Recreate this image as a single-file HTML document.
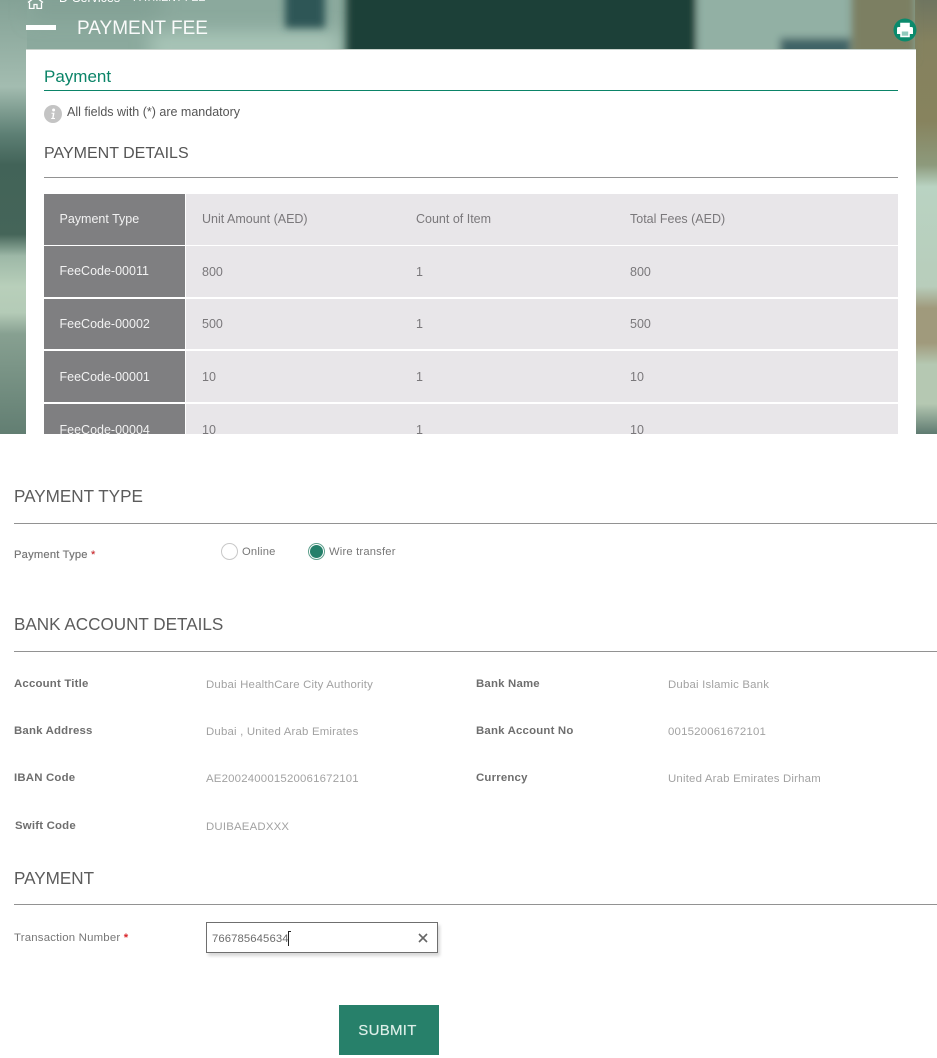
<!DOCTYPE html>
<html>
<head>
<meta charset="utf-8">
<style>
html,body{margin:0;padding:0;background:#fff;}
body{width:937px;height:1058px;position:relative;overflow:hidden;font-family:"Liberation Sans",sans-serif;}
.a{position:absolute;white-space:nowrap;}
.hr{position:absolute;height:1px;background:#929292;}
.dark{position:absolute;left:44px;width:141px;background:#7f7f81;}
.light{position:absolute;left:186px;width:712px;background:#e8e6e9;}
.dt{color:#fff;font-size:12.5px;left:59.5px;position:absolute;white-space:nowrap;opacity:.9;}
.lt{color:#7a787b;font-size:12.5px;position:absolute;white-space:nowrap;}
.h{position:absolute;left:14px;font-size:17.1px;color:#5c5c5c;white-space:nowrap;filter:blur(.3px);}
.lab{position:absolute;font-size:11.4px;font-weight:bold;color:#6e6e6e;white-space:nowrap;letter-spacing:.2px;filter:blur(.3px);}
.val{position:absolute;font-size:11.4px;color:#a2a2a2;white-space:nowrap;letter-spacing:.2px;filter:blur(.3px);}
</style>
</head>
<body>
<div style="position:absolute;left:0;top:0;width:937px;height:434px;overflow:hidden;background:#8ba99d;">
<svg width="937" height="434" style="position:absolute;left:0;top:0">
<defs>
<linearGradient id="l" x1="0" y1="0" x2="0" y2="1">
<stop offset="0" stop-color="#84a296"/>
<stop offset=".2" stop-color="#a3bcb0"/>
<stop offset=".255" stop-color="#7f9d91"/>
<stop offset=".31" stop-color="#5d7f74"/>
<stop offset=".38" stop-color="#426358"/>
<stop offset=".54" stop-color="#456559"/>
<stop offset=".59" stop-color="#9db8a7"/>
<stop offset=".66" stop-color="#b8cfba"/>
<stop offset=".72" stop-color="#b4cbb7"/>
<stop offset=".77" stop-color="#87a091"/>
<stop offset="1" stop-color="#627e72"/>
</linearGradient>
<linearGradient id="r" x1="0" y1="0" x2="0" y2="1">
<stop offset="0" stop-color="#6f7560"/>
<stop offset=".1" stop-color="#85825f"/>
<stop offset=".28" stop-color="#87835e"/>
<stop offset=".38" stop-color="#8d9a7c"/>
<stop offset=".43" stop-color="#b9d3c2"/>
<stop offset=".66" stop-color="#b8cdbb"/>
<stop offset=".71" stop-color="#a09a7c"/>
<stop offset=".79" stop-color="#a09a7c"/>
<stop offset=".84" stop-color="#b5c8b2"/>
<stop offset=".93" stop-color="#b5c8b2"/>
<stop offset="1" stop-color="#5e7a70"/>
</linearGradient>
<filter id="b" x="-30%" y="-30%" width="160%" height="160%"><feGaussianBlur stdDeviation="4"/></filter>
<filter id="s" x="-30%" y="-30%" width="160%" height="160%"><feGaussianBlur stdDeviation="9"/></filter>
</defs>
<rect x="0" y="0" width="27" height="434" fill="url(#l)"/>
<rect x="915" y="0" width="22" height="434" fill="url(#r)"/>
<g filter="url(#s)">
<rect x="150" y="32" width="190" height="30" fill="#a8c5b7"/>
<rect x="30" y="-20" width="130" height="40" fill="#83a195"/>
</g>
<g filter="url(#b)">
<rect x="285" y="-10" width="40" height="38" fill="#2f5757"/>
<rect x="346" y="-10" width="350" height="75" fill="#1c3f37"/>
<rect x="698" y="-10" width="150" height="70" fill="#92b0a4"/>
<rect x="780" y="38" width="70" height="20" fill="#3f6466"/>
<rect x="852" y="-10" width="63" height="70" fill="#7c7f62"/>
</g>
<svg x="27" y="-3" width="18" height="12" viewBox="0 0 18 12" fill="none" stroke="#fff" stroke-width="1.3"><path d="M2.5 5.5V11.5H7V7.5H10V11.5H14.5V5.5M1 5.5L8.5 0L16 5.5"/></svg>
</svg>
<div class="a" style="left:59px;top:-9px;color:#fff;font-size:12.5px;">D-Services</div>
<div class="a" style="left:133px;top:-8px;color:#fff;font-size:10.5px;">PAYMENT FEE</div>
<div class="a" style="left:26px;top:25px;width:30px;height:5px;background:#fff;"></div>
<div class="a" style="left:77px;top:18px;color:#fff;font-size:19px;opacity:.95;">PAYMENT FEE</div>
<svg width="24" height="24" viewBox="0 0 24 24" style="position:absolute;left:893px;top:18px">
<circle cx="12" cy="12" r="11.5" fill="#0b8a6c"/>
<path d="M7.2 9V4.8H16.8V9H18.5A1.5 1.5 0 0 1 20 10.5V16H16.8V19.2H7.2V16H4V10.5A1.5 1.5 0 0 1 5.5 9Z" fill="#fff"/>
<rect x="8.8" y="13.5" width="6.4" height="4.2" fill="#0b8a6c" opacity=".45"/>
</svg>
<div style="position:absolute;left:26px;top:49px;width:890px;height:400px;background:#fff;border-top:1px solid #c9d3cc;box-sizing:border-box;"></div>
<div class="a" style="left:44px;top:67px;color:#0b8468;font-size:17px;">Payment</div>
<div class="a" style="left:44px;top:90px;width:854px;height:1px;background:#0b8468;"></div>
<svg width="18" height="18" viewBox="0 0 18 18" style="position:absolute;left:44px;top:105px"><circle cx="9" cy="9" r="9" fill="#c4c4c4"/><circle cx="9.6" cy="5" r="1.5" fill="#fff"/><path d="M7.5 7.8H10.5L9.6 13H11V14H7.2V13H8.2L8.9 8.8H7.5Z" fill="#fff"/></svg>
<div class="a" style="left:67px;top:105px;color:#555;font-size:12.5px;">All fields with (*) are mandatory</div>
<div class="a" style="left:44px;top:145px;color:#555;font-size:16px;">PAYMENT DETAILS</div>
<div class="hr" style="left:44px;top:177px;width:854px;"></div>

<div class="dark" style="top:194px;height:51px;"></div><div class="light" style="top:194px;height:51px;"></div>
<div class="dark" style="top:246px;height:51px;"></div><div class="light" style="top:246px;height:51px;"></div>
<div class="dark" style="top:299px;height:50px;"></div><div class="light" style="top:299px;height:50px;"></div>
<div class="dark" style="top:351px;height:51px;"></div><div class="light" style="top:351px;height:51px;"></div>
<div class="dark" style="top:404px;height:30px;"></div><div class="light" style="top:404px;height:30px;"></div>

<div class="dt" style="top:212px;">Payment Type</div>
<div class="lt" style="left:202px;top:212px;">Unit Amount (AED)</div>
<div class="lt" style="left:416px;top:212px;">Count of Item</div>
<div class="lt" style="left:630px;top:212px;">Total Fees (AED)</div>

<div class="dt" style="top:264px;">FeeCode-00011</div>
<div class="lt" style="left:202px;top:265px;">800</div><div class="lt" style="left:416px;top:265px;">1</div><div class="lt" style="left:630px;top:265px;">800</div>

<div class="dt" style="top:317px;">FeeCode-00002</div>
<div class="lt" style="left:202px;top:317px;">500</div><div class="lt" style="left:416px;top:317px;">1</div><div class="lt" style="left:630px;top:317px;">500</div>

<div class="dt" style="top:370px;">FeeCode-00001</div>
<div class="lt" style="left:202px;top:370px;">10</div><div class="lt" style="left:416px;top:370px;">1</div><div class="lt" style="left:630px;top:370px;">10</div>

<div class="dt" style="top:423px;">FeeCode-00004</div>
<div class="lt" style="left:202px;top:423px;">10</div><div class="lt" style="left:416px;top:423px;">1</div><div class="lt" style="left:630px;top:423px;">10</div>
</div>

<div class="h" style="top:487px;">PAYMENT TYPE</div>
<div class="hr" style="left:14px;top:523px;width:923px;"></div>
<div class="lab" style="left:14px;top:549px;font-weight:normal;color:#777;text-shadow:0 0 .4px #777;font-size:11.2px;">Payment Type <span style="color:#d9252a">*</span></div>
<div style="position:absolute;left:221px;top:543px;width:15px;height:15px;border:1px solid #c8c8c8;border-radius:50%;"></div>
<div class="lab" style="left:242px;top:546px;font-weight:normal;color:#777;font-size:11.2px;">Online</div>
<div style="position:absolute;left:308px;top:543px;width:17px;height:17px;border:1px solid #5fa08d;border-radius:50%;box-sizing:border-box;background:#fff;"></div>
<div style="position:absolute;left:310px;top:545px;width:13px;height:13px;border-radius:50%;background:#24806a;"></div>
<div class="lab" style="left:329px;top:546px;font-weight:normal;color:#777;font-size:11.2px;">Wire transfer</div>

<div class="h" style="top:615px;">BANK ACCOUNT DETAILS</div>
<div class="hr" style="left:14px;top:651px;width:923px;"></div>

<div class="lab" style="left:14px;top:678px;">Account Title</div>
<div class="val" style="left:206px;top:679px;">Dubai HealthCare City Authority</div>
<div class="lab" style="left:476px;top:678px;">Bank Name</div>
<div class="val" style="left:668px;top:679px;">Dubai Islamic Bank</div>

<div class="lab" style="left:14px;top:725px;">Bank Address</div>
<div class="val" style="left:206px;top:726px;">Dubai , United Arab Emirates</div>
<div class="lab" style="left:476px;top:725px;">Bank Account No</div>
<div class="val" style="left:668px;top:726px;">001520061672101</div>

<div class="lab" style="left:14px;top:772px;">IBAN Code</div>
<div class="val" style="left:206px;top:773px;">AE200240001520061672101</div>
<div class="lab" style="left:476px;top:772px;">Currency</div>
<div class="val" style="left:668px;top:773px;">United Arab Emirates Dirham</div>

<div class="lab" style="left:15px;top:820px;">Swift Code</div>
<div class="val" style="left:206px;top:821px;">DUIBAEADXXX</div>

<div class="h" style="top:869px;">PAYMENT</div>
<div class="hr" style="left:14px;top:904px;width:923px;"></div>
<div class="lab" style="left:14px;top:932px;font-weight:normal;color:#777;font-size:11.4px;">Transaction Number <span style="color:#d9252a;font-weight:bold;">*</span></div>
<div style="position:absolute;left:206px;top:922px;width:232px;height:31px;box-sizing:border-box;border:1px solid #6f6f6f;background:#fff;box-shadow:2px 3px 3px #d8d8d8;"></div>
<div class="a" style="left:212px;top:933px;font-size:11.3px;color:#6c6c6c;letter-spacing:.1px;">766785645634</div>
<div class="a" style="left:288px;top:931px;width:1px;height:15px;background:#222;"></div>
<div class="a" style="left:289px;top:931px;width:2px;height:1px;background:#222;"></div>
<svg width="10" height="10" viewBox="0 0 10 10" style="position:absolute;left:418px;top:933px"><path d="M1 1L9 9M9 1L1 9" stroke="#666" stroke-width="1.6"/></svg>

<div style="position:absolute;left:339px;top:1005px;width:100px;height:50px;background:#27806a;"></div>
<div class="a" style="left:339px;top:1022px;width:97px;text-align:center;color:#dceee8;font-size:15px;text-shadow:0 0 .5px #dceee8;letter-spacing:.3px;">SUBMIT</div>
</body>
</html>
